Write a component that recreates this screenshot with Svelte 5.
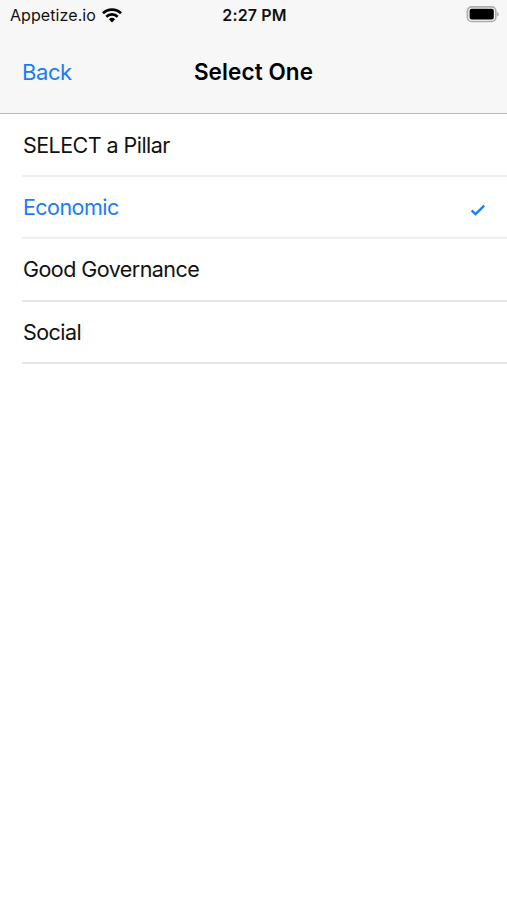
<script lang="ts">
  let options = ["SELECT a Pillar", "Economic", "Good Governance", "Social"];
  let selected = $state("Economic");
</script>

<div class="screen">
  <header class="header">
    <div class="status-bar">
      <div class="carrier">
        <span>Appetize.io</span>
        <svg class="wifi" viewBox="0 0 20 15" width="20" height="15">
          <g fill="none" stroke="#000" stroke-width="2.7">
            <path d="M1 5.3a12.8 12.8 0 0 1 18 0" />
            <path d="M4.3 8.8a8.1 8.1 0 0 1 11.4 0" />
          </g>
          <path d="M10 14.4 6.9 11.3a4.5 4.5 0 0 1 6.2 0z" />
        </svg>
      </div>
      <span class="time">2:27 PM</span>
      <svg class="battery" viewBox="0 0 33 17" width="33" height="17">
        <rect x="1.4" y="0.9" width="28.4" height="14.6" rx="4.2" fill="#f7f7f7" stroke="#adadad" stroke-width="1.7" />
        <rect x="3.6" y="2.7" width="24.2" height="10.8" rx="2" />
        <path d="M31.200 6v4.500c2-.8 2-3.700 0-4.500z" fill="#a5a5a5" />
      </svg>
    </div>
    <nav class="nav-bar">
      <button class="back" type="button">Back</button>
      <h1 class="title">Select One</h1>
    </nav>
  </header>

  <ul class="list">
    {#each options as option}
      <li>
        <button
          class="row"
          class:selected={selected === option}
          onclick={() => selected = option}
          type="button"
        >
          <span>{option}</span>
          {#if selected === option}
            <svg class="check" viewBox="0 0 16 12" width="16" height="12">
              <path d="m1.600 6.400 3.900 3.700 8.700-8.500" fill="none" stroke="currentColor" stroke-width="2.300" />
            </svg>
          {/if}
        </button>
      </li>
    {/each}
  </ul>
</div>

<style>
  :global(body) {
    background: #fff;
  }
  .screen {
    min-height: 900px;
    background: #fff;
    color: #111;
    font-family: Inter, "Liberation Sans", sans-serif;
  }
  .header {
    height: 114px;
    box-sizing: border-box;
    background: #f7f7f7;
    border-bottom: 1px solid #bababa;
  }
  .status-bar {
    display: grid;
    grid-template-columns: 1fr auto 1fr;
    align-items: center;
    height: 30px;
    padding: 0 8px 0 10px;
    font-size: 16px;
    line-height: 30px;
  }
  .carrier {
    display: flex;
    align-items: center;
    gap: 6px;
    letter-spacing: 0.08px;
  }
  .time {
    font-weight: 600;
    letter-spacing: 0.15px;
  }
  .battery {
    justify-self: end;
    margin-top: -1px;
  }
  .nav-bar {
    display: grid;
    grid-template-columns: 1fr auto 1fr;
    align-items: center;
    height: 83px;
    padding: 0 22px;
  }
  .back {
    justify-self: start;
    padding: 1px 0 0;
    border: none;
    background: none;
    color: #1a7cf5;
    font: inherit;
    font-size: 22px;
    letter-spacing: -0.4px;
  }
  .title {
    margin: 0;
    font-size: 22.5px;
    font-weight: 600;
    letter-spacing: 0.1px;
    color: #000;
  }
  .list {
    margin: 0;
    padding: 1px 0 0 22px;
    list-style: none;
  }
  .row {
    display: flex;
    align-items: center;
    justify-content: space-between;
    width: 100%;
    height: 62.2px;
    box-sizing: border-box;
    padding: 0 21px 0 1px;
    border: none;
    border-bottom: 2px solid #e6e6e6;
    background: none;
    color: inherit;
    font: inherit;
    font-size: 21.5px;
    letter-spacing: -0.55px;
    text-align: left;
  }
  li:nth-child(-n + 2) .row {
    border-bottom-color: #efefef;
  }
  .row.selected {
    color: #1a7cf5;
  }
  .check {
    margin-top: 6px;
  }
</style>
